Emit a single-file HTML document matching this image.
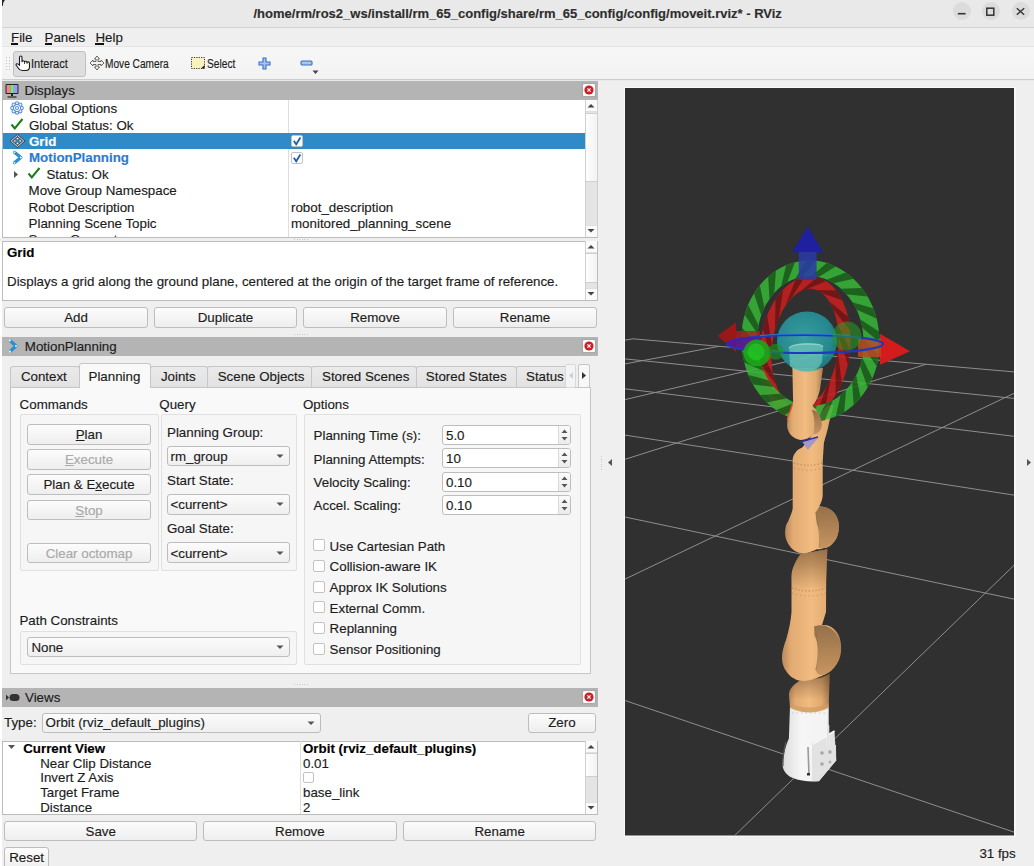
<!DOCTYPE html><html><head><meta charset="utf-8"><style>
html,body{margin:0;padding:0;}
body{width:1034px;height:866px;overflow:hidden;position:relative;background:#efefef;font-family:"Liberation Sans",sans-serif;}
.t{position:absolute;white-space:nowrap;-webkit-text-stroke:0.15px currentColor;}
.r{position:absolute;}
u{text-decoration:underline;text-underline-offset:1px;}
</style></head><body>
<div class="r" style="left:0px;top:0px;width:2px;height:866px;background:#fff;"></div>
<div class="r" style="left:2px;top:0px;width:1032px;height:27px;background:#e9e9e9;"></div>
<div class="r" style="left:2px;top:27px;width:1032px;height:1px;background:#d3d3d3;"></div>
<svg class="r" style="left:1px;top:0px" width="6" height="7"><path d="M1 0H4C2.6 1.5 2 3 1.8 6H1Z" fill="#222"/></svg>
<div class="t " style="left:253.5px;top:7.10px;font-size:13px;line-height:13px;font-weight:bold;color:#2e2e2e;">/home/rm/ros2_ws/install/rm_65_config/share/rm_65_config/config/moveit.rviz* - RViz</div>
<div class="r" style="left:952.8px;top:2.4px;width:18px;height:18px;border-radius:50%;background:#dcdcdc;"></div>
<div class="r" style="left:981.9px;top:2.4px;width:18px;height:18px;border-radius:50%;background:#dcdcdc;"></div>
<div class="r" style="left:1011.5px;top:2.4px;width:18px;height:18px;border-radius:50%;background:#dcdcdc;"></div>
<svg class="r" style="left:950px;top:0px" width="84" height="24"><path d="M7.8 13.7H15.6" stroke="#333" stroke-width="1.6"/><rect x="36.8" y="8.2" width="7" height="7" fill="none" stroke="#333" stroke-width="1.5"/><path d="M66.8 8.2L74.2 14.8M74.2 8.2L66.8 14.8" stroke="#333" stroke-width="1.4"/></svg>
<div class="r" style="left:2px;top:28px;width:1032px;height:18px;background:#efefef;"></div>
<div class="r" style="left:2px;top:46px;width:1032px;height:1px;background:#e3e3e3;"></div>
<div class="t " style="left:11px;top:30.82px;font-size:13.33px;line-height:13.33px;font-weight:normal;color:#1c1c1c;">File</div>
<div class="r" style="left:11px;top:43.3px;width:7px;height:1.5px;background:#111;"></div>
<div class="t " style="left:44.5px;top:30.82px;font-size:13.33px;line-height:13.33px;font-weight:normal;color:#1c1c1c;">Panels</div>
<div class="r" style="left:44.5px;top:43.3px;width:7.5px;height:1.5px;background:#111;"></div>
<div class="t " style="left:95.4px;top:30.82px;font-size:13.33px;line-height:13.33px;font-weight:normal;color:#1c1c1c;">Help</div>
<div class="r" style="left:95.4px;top:43.3px;width:8.599999999999994px;height:1.5px;background:#111;"></div>
<div class="r" style="left:2px;top:47px;width:1032px;height:32px;background:linear-gradient(#f7f7f7,#f2f2f2);"></div>
<div class="r" style="left:2px;top:79px;width:1032px;height:1px;background:#cdcdcd;"></div>
<div class="r" style="left:2px;top:80px;width:1032px;height:1px;background:#e8e8e8;"></div>
<div class="r" style="left:6px;top:57px;width:1px;height:1px;background:#c4c4c4;"></div>
<div class="r" style="left:9px;top:57px;width:1px;height:1px;background:#c4c4c4;"></div>
<div class="r" style="left:6px;top:60px;width:1px;height:1px;background:#c4c4c4;"></div>
<div class="r" style="left:9px;top:60px;width:1px;height:1px;background:#c4c4c4;"></div>
<div class="r" style="left:6px;top:63px;width:1px;height:1px;background:#c4c4c4;"></div>
<div class="r" style="left:9px;top:63px;width:1px;height:1px;background:#c4c4c4;"></div>
<div class="r" style="left:6px;top:66px;width:1px;height:1px;background:#c4c4c4;"></div>
<div class="r" style="left:9px;top:66px;width:1px;height:1px;background:#c4c4c4;"></div>
<div class="r" style="left:6px;top:69px;width:1px;height:1px;background:#c4c4c4;"></div>
<div class="r" style="left:9px;top:69px;width:1px;height:1px;background:#c4c4c4;"></div>
<div class="r" style="left:13px;top:50.5px;width:73px;height:26.5px;box-sizing:border-box;border:1px solid #c0c0c0;border-radius:3px;background:#dedede;"></div>
<div class="t " style="left:31px;top:58.14px;font-size:12px;line-height:12px;font-weight:normal;color:#1c1c1c;transform:scaleX(0.92);transform-origin:0 0;">Interact</div>
<svg class="r" style="left:15px;top:55px" width="16" height="17"><path d="M4.5,9.5 V2.6 Q4.5,1 5.75,1 Q7,1 7,2.6 V6.8 Q7,5.8 8.25,5.8 Q9.5,5.8 9.5,7 Q9.5,6.3 10.75,6.3 Q12,6.3 12,7.5 Q12,6.9 13.2,6.9 Q14.5,6.9 14.5,8.3 V11.8 Q14.5,15.5 11,15.5 H7.2 Q4.6,15.5 3.2,13 L1.2,10.2 Q0.7,9 1.9,8.8 Q3,8.6 4.5,10.3 Z" fill="#fff" stroke="#1a1a1a" stroke-width="1.1" stroke-linejoin="round"/><path d="M9.5,7 V9 M12,7.5 V9" stroke="#1a1a1a" stroke-width="0.8"/></svg>
<div class="t " style="left:105.4px;top:58.14px;font-size:12px;line-height:12px;font-weight:normal;color:#1c1c1c;transform:scaleX(0.845);transform-origin:0 0;">Move Camera</div>
<svg class="r" style="left:89px;top:55px" width="16" height="16"><path d="M8 1L10.5 4H9V6.5H12V5L15 8L12 11V9.5H9V12H10.5L8 15L5.5 12H7V9.5H4V11L1 8L4 5V6.5H7V4H5.5Z" fill="#f4f4f4" stroke="#555" stroke-width="0.9"/></svg>
<svg class="r" style="left:190px;top:56px" width="16" height="14"><rect x="1.5" y="1.5" width="13" height="11" fill="#f8f3bd" stroke="#333" stroke-width="1" stroke-dasharray="1.2 1.2"/><path d="M11 12.5H14.5V9Z" fill="#222"/></svg>
<div class="t " style="left:207px;top:58.14px;font-size:12px;line-height:12px;font-weight:normal;color:#1c1c1c;transform:scaleX(0.85);transform-origin:0 0;">Select</div>
<svg class="r" style="left:258px;top:57px" width="13" height="13"><path d="M5 1H8V5H12V8H8V12H5V8H1V5H5Z" fill="#a9c5ec" stroke="#3a6fc4" stroke-width="1.1"/></svg>
<svg class="r" style="left:300px;top:60px" width="13" height="7"><rect x="1" y="1" width="11" height="4" rx="1" fill="#a9c5ec" stroke="#3a6fc4" stroke-width="1.1"/></svg>
<svg class="r" style="left:312px;top:70px" width="7" height="5"><path d="M0.5 0.5H6.5L3.5 4Z" fill="#444"/></svg>
<div class="r" style="left:2px;top:81px;width:596px;height:19px;background:#b4b4b4;"></div>
<svg class="r" style="left:4px;top:83px" width="17" height="16"><rect x="1.5" y="1" width="13" height="10" rx="1" fill="#222"/><rect x="2.5" y="2" width="3.7" height="8" fill="#e88"/><rect x="6.2" y="2" width="3.7" height="8" fill="#8d8"/><rect x="9.9" y="2" width="3.6" height="8" fill="#99f"/><path d="M7 11H9V13H7Z" fill="#222"/><path d="M3.5 14H12.5" stroke="#222" stroke-width="1.2"/></svg>
<div class="t " style="left:24.5px;top:84.42px;font-size:13.33px;line-height:13.33px;font-weight:normal;color:#1c1c1c;">Displays</div>
<div class="r" style="left:582px;top:83px;width:14px;height:14px;box-sizing:border-box;border:1px solid #a9a9a9;border-radius:2px;background:#fafafa;box-shadow:0 0 1px #999;"></div><svg class="r" style="left:582px;top:83px" width="14" height="14"><circle cx="7" cy="7" r="4.6" fill="#cc1f26"/><path d="M5.4 5.4L8.6 8.6M8.6 5.4L5.4 8.6" stroke="#fff" stroke-width="1.2"/></svg>
<div class="r" style="left:2px;top:100px;width:596px;height:138px;box-sizing:border-box;border-left:1px solid #bcbcbc;border-bottom:1px solid #bcbcbc;border-right:1px solid #d0d0d0;background:#fff;"></div>
<div class="r" style="left:288px;top:100px;width:1px;height:137px;background:#dedede;"></div>
<div class="r" style="left:3px;top:133.2px;width:583px;height:16.200000000000017px;background:#2f8bc7;"></div>
<div class="t " style="left:29px;top:102.12px;font-size:13.33px;line-height:13.33px;font-weight:normal;color:#1c1c1c;">Global Options</div>
<div class="t " style="left:29px;top:118.52px;font-size:13.33px;line-height:13.33px;font-weight:normal;color:#1c1c1c;">Global Status: Ok</div>
<div class="t " style="left:29px;top:134.92px;font-size:13.33px;line-height:13.33px;font-weight:bold;color:#fff;">Grid</div>
<div class="t " style="left:29px;top:151.32px;font-size:13.33px;line-height:13.33px;font-weight:bold;color:#2a7bcf;">MotionPlanning</div>
<div class="t " style="left:46.4px;top:167.72px;font-size:13.33px;line-height:13.33px;font-weight:normal;color:#1c1c1c;">Status: Ok</div>
<div class="t " style="left:28.6px;top:184.12px;font-size:13.33px;line-height:13.33px;font-weight:normal;color:#1c1c1c;">Move Group Namespace</div>
<div class="t " style="left:28.6px;top:200.52px;font-size:13.33px;line-height:13.33px;font-weight:normal;color:#1c1c1c;">Robot Description</div>
<div class="t " style="left:28.6px;top:216.92px;font-size:13.33px;line-height:13.33px;font-weight:normal;color:#1c1c1c;">Planning Scene Topic</div>
<div class="t " style="left:28.6px;top:233.32px;font-size:13.33px;line-height:13.33px;font-weight:normal;color:#1c1c1c;">Scene Geometry</div>
<div class="t " style="left:291px;top:200.52px;font-size:13.33px;line-height:13.33px;font-weight:normal;color:#1c1c1c;">robot_description</div>
<div class="t " style="left:291px;top:216.92px;font-size:13.33px;line-height:13.33px;font-weight:normal;color:#1c1c1c;">monitored_planning_scene</div>
<div class="r" style="left:2px;top:237px;width:596px;height:1px;background:#bcbcbc;"></div>
<div class="r" style="left:0px;top:238px;width:620px;height:3px;background:#efefef;"></div>
<svg class="r" style="left:10px;top:101px" width="14" height="14"><g fill="#fff" stroke="#5a8fd6" stroke-width="1.1"><circle cx="11.60" cy="7.00" r="1.7"/><circle cx="10.25" cy="10.25" r="1.7"/><circle cx="7.00" cy="11.60" r="1.7"/><circle cx="3.75" cy="10.25" r="1.7"/><circle cx="2.40" cy="7.00" r="1.7"/><circle cx="3.75" cy="3.75" r="1.7"/><circle cx="7.00" cy="2.40" r="1.7"/><circle cx="10.25" cy="3.75" r="1.7"/></g><circle cx="7" cy="7" r="4.3" fill="#fff" stroke="none"/><circle cx="7" cy="7" r="3.6" fill="none" stroke="#5a8fd6" stroke-width="1.2"/><circle cx="7" cy="7" r="1.5" fill="none" stroke="#5a8fd6" stroke-width="1.1"/></svg>
<svg class="r" style="left:10px;top:117px" width="14" height="14"><path d="M1.5 7.5L4.8 11.5L12.5 2" fill="none" stroke="#1d7a1d" stroke-width="2"/></svg>
<svg class="r" style="left:10px;top:134px" width="16" height="14"><path d="M7.5 1.5L13.8 7L7.5 12.5L1.2 7Z" fill="none" stroke="#3c4a58" stroke-width="2.4"/><path d="M7.5 1.5L13.8 7L7.5 12.5L1.2 7Z" fill="none" stroke="#e8f0f8" stroke-width="0.9"/><g fill="#f4f8fc" stroke="#3c4a58" stroke-width="0.6"><circle cx="7.5" cy="4.6" r="1.2"/><circle cx="4.8" cy="7" r="1.2"/><circle cx="10.2" cy="7" r="1.2"/><circle cx="7.5" cy="9.4" r="1.2"/></g></svg>
<svg class="r" style="left:12px;top:150px" width="12" height="15"><path d="M2.5 2.2L8.8 7.5L2.5 12.8" fill="none" stroke="#2b8fd3" stroke-width="3.2" stroke-linejoin="round" stroke-linecap="round"/><circle cx="2.5" cy="2.2" r="0.9" fill="#fff"/><circle cx="8.8" cy="7.5" r="0.9" fill="#fff"/><circle cx="2.5" cy="12.8" r="0.9" fill="#fff"/></svg>
<svg class="r" style="left:13px;top:170px" width="6" height="9"><path d="M1 1L5 4.5L1 8Z" fill="#555"/></svg>
<svg class="r" style="left:27px;top:166px" width="14" height="14"><path d="M1.5 7.5L4.8 11.5L12.5 2" fill="none" stroke="#1d7a1d" stroke-width="2"/></svg>
<div class="r" style="left:291px;top:135.2px;width:12px;height:12.0px;box-sizing:border-box;border:1px solid #c2c2c2;border-radius:2px;background:#fff;"></div><svg class="r" style="left:291px;top:135.2px" width="12" height="12"><path d="M2.8 5.8L5.2 9.3L9.4 2.6" stroke="#1f5fa8" stroke-width="1.8" fill="none"/></svg>
<div class="r" style="left:291px;top:151.6px;width:12px;height:12.0px;box-sizing:border-box;border:1px solid #c2c2c2;border-radius:2px;background:#fff;"></div><svg class="r" style="left:291px;top:151.6px" width="12" height="12"><path d="M2.8 5.8L5.2 9.3L9.4 2.6" stroke="#1f5fa8" stroke-width="1.8" fill="none"/></svg>
<div class="r" style="left:585px;top:100px;width:12px;height:137px;box-sizing:border-box;border-left:1px solid #d0d0d0;background:#e4e4e4;"></div><div class="r" style="left:586px;top:112.7px;width:11px;height:69.10000000000001px;box-sizing:border-box;border-bottom:1px solid #cfcfcf;border-top:1px solid #cfcfcf;background:linear-gradient(90deg,#fdfdfd,#f3f3f3);"></div><div class="r" style="left:586px;top:100px;width:11px;height:12px;background:#fafafa;border-bottom:1px solid #e0e0e0;box-sizing:border-box;"></div><div class="r" style="left:586px;top:225px;width:11px;height:12px;background:#fafafa;border-top:1px solid #e0e0e0;box-sizing:border-box;"></div><svg class="r" style="left:587.0px;top:103px" width="8" height="6"><path d="M0.5 4.5L4 1L7.5 4.5Z" fill="#444"/></svg><svg class="r" style="left:587.0px;top:228px" width="8" height="6"><path d="M0.5 1L4 4.5L7.5 1Z" fill="#444"/></svg>
<div class="r" style="left:2px;top:241px;width:596px;height:60px;box-sizing:border-box;border:1px solid #bcbcbc;background:#fff;"></div>
<div class="t " style="left:7px;top:246.22px;font-size:13.33px;line-height:13.33px;font-weight:bold;color:#000;">Grid</div>
<div class="t " style="left:7px;top:275.12px;font-size:13.33px;line-height:13.33px;font-weight:normal;color:#1c1c1c;">Displays a grid along the ground plane, centered at the origin of the target frame of reference.</div>
<div class="r" style="left:585px;top:241px;width:12px;height:59px;box-sizing:border-box;border-left:1px solid #d0d0d0;background:#e4e4e4;"></div><div class="r" style="left:586px;top:253px;width:11px;height:30px;box-sizing:border-box;border-bottom:1px solid #cfcfcf;border-top:1px solid #cfcfcf;background:linear-gradient(90deg,#fdfdfd,#f3f3f3);"></div><div class="r" style="left:586px;top:241px;width:11px;height:12px;background:#fafafa;border-bottom:1px solid #e0e0e0;box-sizing:border-box;"></div><div class="r" style="left:586px;top:288px;width:11px;height:12px;background:#fafafa;border-top:1px solid #e0e0e0;box-sizing:border-box;"></div><svg class="r" style="left:587.0px;top:244px" width="8" height="6"><path d="M0.5 4.5L4 1L7.5 4.5Z" fill="#444"/></svg><svg class="r" style="left:587.0px;top:291px" width="8" height="6"><path d="M0.5 1L4 4.5L7.5 1Z" fill="#444"/></svg>
<div class="r" style="left:4px;top:306.7px;width:144px;height:20.900000000000034px;box-sizing:border-box;border:1px solid #bdbdbd;border-radius:3px;background:linear-gradient(#fcfcfc,#eeeeee);"></div><div class="t" style="left:4px;width:144px;text-align:center;top:310.72px;font-size:13.33px;line-height:13.33px;font-weight:normal;color:#1c1c1c;">Add</div>
<div class="r" style="left:154px;top:306.7px;width:143px;height:20.900000000000034px;box-sizing:border-box;border:1px solid #bdbdbd;border-radius:3px;background:linear-gradient(#fcfcfc,#eeeeee);"></div><div class="t" style="left:154px;width:143px;text-align:center;top:310.72px;font-size:13.33px;line-height:13.33px;font-weight:normal;color:#1c1c1c;">Duplicate</div>
<div class="r" style="left:303px;top:306.7px;width:144px;height:20.900000000000034px;box-sizing:border-box;border:1px solid #bdbdbd;border-radius:3px;background:linear-gradient(#fcfcfc,#eeeeee);"></div><div class="t" style="left:303px;width:144px;text-align:center;top:310.72px;font-size:13.33px;line-height:13.33px;font-weight:normal;color:#1c1c1c;">Remove</div>
<div class="r" style="left:453px;top:306.7px;width:144px;height:20.900000000000034px;box-sizing:border-box;border:1px solid #bdbdbd;border-radius:3px;background:linear-gradient(#fcfcfc,#eeeeee);"></div><div class="t" style="left:453px;width:144px;text-align:center;top:310.72px;font-size:13.33px;line-height:13.33px;font-weight:normal;color:#1c1c1c;">Rename</div>
<div class="r" style="left:2px;top:337px;width:596px;height:18.5px;background:#b4b4b4;"></div>
<svg class="r" style="left:7px;top:338px" width="12" height="16"><path d="M3 2.5L9 8L3 13.5" fill="none" stroke="#2b8fd3" stroke-width="3.2" stroke-linejoin="round"/><circle cx="3" cy="2.5" r="0.9" fill="#fff"/><circle cx="9" cy="8" r="0.9" fill="#fff"/><circle cx="3" cy="13.5" r="0.9" fill="#fff"/></svg>
<div class="t " style="left:24.8px;top:340.12px;font-size:13.33px;line-height:13.33px;font-weight:normal;color:#1c1c1c;">MotionPlanning</div>
<div class="r" style="left:582px;top:339px;width:14px;height:14px;box-sizing:border-box;border:1px solid #a9a9a9;border-radius:2px;background:#fafafa;box-shadow:0 0 1px #999;"></div><svg class="r" style="left:582px;top:339px" width="14" height="14"><circle cx="7" cy="7" r="4.6" fill="#cc1f26"/><path d="M5.4 5.4L8.6 8.6M8.6 5.4L5.4 8.6" stroke="#fff" stroke-width="1.2"/></svg>
<div class="r" style="left:9.5px;top:386.5px;width:581.5px;height:287.0px;box-sizing:border-box;border:1px solid #c6c6c6;background:#f9f9f9;"></div>
<div class="r" style="left:9.5px;top:365.5px;width:70.0px;height:21.5px;box-sizing:border-box;border:1px solid #c6c6c6;border-bottom:none;border-radius:3px 3px 0 0;background:linear-gradient(#eaeaea,#e2e2e2);"></div>
<div class="t " style="left:20.9px;top:370.22px;font-size:13.33px;line-height:13.33px;font-weight:normal;color:#1c1c1c;">Context</div>
<div class="r" style="left:150.4px;top:365.5px;width:57.900000000000006px;height:21.5px;box-sizing:border-box;border:1px solid #c6c6c6;border-bottom:none;border-radius:3px 3px 0 0;background:linear-gradient(#eaeaea,#e2e2e2);"></div>
<div class="t " style="left:160.9px;top:370.22px;font-size:13.33px;line-height:13.33px;font-weight:normal;color:#1c1c1c;">Joints</div>
<div class="r" style="left:207.3px;top:365.5px;width:104.89999999999998px;height:21.5px;box-sizing:border-box;border:1px solid #c6c6c6;border-bottom:none;border-radius:3px 3px 0 0;background:linear-gradient(#eaeaea,#e2e2e2);"></div>
<div class="t " style="left:217.7px;top:370.22px;font-size:13.33px;line-height:13.33px;font-weight:normal;color:#1c1c1c;">Scene Objects</div>
<div class="r" style="left:311.2px;top:365.5px;width:105.80000000000001px;height:21.5px;box-sizing:border-box;border:1px solid #c6c6c6;border-bottom:none;border-radius:3px 3px 0 0;background:linear-gradient(#eaeaea,#e2e2e2);"></div>
<div class="t " style="left:322px;top:370.22px;font-size:13.33px;line-height:13.33px;font-weight:normal;color:#1c1c1c;">Stored Scenes</div>
<div class="r" style="left:416px;top:365.5px;width:101px;height:21.5px;box-sizing:border-box;border:1px solid #c6c6c6;border-bottom:none;border-radius:3px 3px 0 0;background:linear-gradient(#eaeaea,#e2e2e2);"></div>
<div class="t " style="left:425.8px;top:370.22px;font-size:13.33px;line-height:13.33px;font-weight:normal;color:#1c1c1c;">Stored States</div>
<div class="r" style="left:516px;top:365.5px;width:55px;height:21.5px;box-sizing:border-box;border:1px solid #c6c6c6;border-bottom:none;border-radius:3px 3px 0 0;background:linear-gradient(#eaeaea,#e2e2e2);"></div>
<div class="t " style="left:526px;top:370.22px;font-size:13.33px;line-height:13.33px;font-weight:normal;color:#1c1c1c;">Status</div>
<div class="r" style="left:78.5px;top:363.3px;width:72.9px;height:24.69999999999999px;box-sizing:border-box;border:1px solid #c6c6c6;border-bottom:none;border-radius:3px 3px 0 0;background:#f9f9f9;"></div>
<div class="t " style="left:88.5px;top:369.52px;font-size:13.33px;line-height:13.33px;font-weight:normal;color:#1c1c1c;">Planning</div>
<div class="r" style="left:565px;top:363.5px;width:11px;height:24.0px;box-sizing:border-box;border:1px solid #d8d8d8;border-radius:2px;background:#f4f4f4;"></div>
<div class="r" style="left:578px;top:363.5px;width:12px;height:24.0px;box-sizing:border-box;border:1px solid #c6c6c6;border-radius:2px;background:#f8f8f8;"></div>
<svg class="r" style="left:567px;top:371px" width="8" height="9"><path d="M6 1L2 4.5L6 8Z" fill="#cfcfcf"/></svg>
<svg class="r" style="left:580px;top:371px" width="8" height="9"><path d="M2 1L6 4.5L2 8Z" fill="#333"/></svg>
<div class="t " style="left:19.6px;top:397.82px;font-size:13.33px;line-height:13.33px;font-weight:normal;color:#1c1c1c;">Commands</div>
<div class="t " style="left:159.3px;top:397.82px;font-size:13.33px;line-height:13.33px;font-weight:normal;color:#1c1c1c;">Query</div>
<div class="t " style="left:303px;top:397.82px;font-size:13.33px;line-height:13.33px;font-weight:normal;color:#1c1c1c;">Options</div>
<div class="r" style="left:20.4px;top:414.4px;width:138.6px;height:156.60000000000002px;box-sizing:border-box;border:1px solid #e0e0e0;border-radius:2px;background:#f6f6f6;"></div>
<div class="r" style="left:160.5px;top:414.4px;width:136.5px;height:156.60000000000002px;box-sizing:border-box;border:1px solid #e0e0e0;border-radius:2px;background:#f6f6f6;"></div>
<div class="r" style="left:303.5px;top:414.4px;width:277.5px;height:250.60000000000002px;box-sizing:border-box;border:1px solid #e0e0e0;border-radius:2px;background:#f6f6f6;"></div>
<div class="r" style="left:27.4px;top:424px;width:123.29999999999998px;height:20.80000000000001px;box-sizing:border-box;border:1px solid #bdbdbd;border-radius:3px;background:linear-gradient(#fcfcfc,#eeeeee);"></div><div class="t" style="left:27.4px;width:123.29999999999998px;text-align:center;top:428.22px;font-size:13.33px;line-height:13.33px;font-weight:normal;color:#1c1c1c;"><u>P</u>lan</div>
<div class="r" style="left:27.4px;top:449px;width:123.29999999999998px;height:20.5px;box-sizing:border-box;border:1px solid #bdbdbd;border-radius:3px;background:linear-gradient(#fcfcfc,#eeeeee);"></div><div class="t" style="left:27.4px;width:123.29999999999998px;text-align:center;top:453.07px;font-size:13.33px;line-height:13.33px;font-weight:normal;color:#a9a9a9;"><u>E</u>xecute</div>
<div class="r" style="left:27.4px;top:474px;width:123.29999999999998px;height:20.80000000000001px;box-sizing:border-box;border:1px solid #bdbdbd;border-radius:3px;background:linear-gradient(#fcfcfc,#eeeeee);"></div><div class="t" style="left:27.4px;width:123.29999999999998px;text-align:center;top:478.22px;font-size:13.33px;line-height:13.33px;font-weight:normal;color:#1c1c1c;">Plan &amp; E<u>x</u>ecute</div>
<div class="r" style="left:27.4px;top:499.5px;width:123.29999999999998px;height:20.5px;box-sizing:border-box;border:1px solid #bdbdbd;border-radius:3px;background:linear-gradient(#fcfcfc,#eeeeee);"></div><div class="t" style="left:27.4px;width:123.29999999999998px;text-align:center;top:503.57px;font-size:13.33px;line-height:13.33px;font-weight:normal;color:#a9a9a9;"><u>S</u>top</div>
<div class="r" style="left:27.4px;top:542.6px;width:123.29999999999998px;height:20.399999999999977px;box-sizing:border-box;border:1px solid #bdbdbd;border-radius:3px;background:linear-gradient(#fcfcfc,#eeeeee);"></div><div class="t" style="left:27.4px;width:123.29999999999998px;text-align:center;top:546.62px;font-size:13.33px;line-height:13.33px;font-weight:normal;color:#a9a9a9;">Clear octomap</div>
<div class="t " style="left:167px;top:425.92px;font-size:13.33px;line-height:13.33px;font-weight:normal;color:#1c1c1c;">Planning Group:</div>
<div class="r" style="left:166.5px;top:445.5px;width:123.30000000000001px;height:20.80000000000001px;box-sizing:border-box;border:1px solid #bdbdbd;border-radius:3px;background:linear-gradient(#fbfbfb,#efefef);"></div><div class="t " style="left:170.5px;top:449.72px;font-size:13.33px;line-height:13.33px;font-weight:normal;color:#1c1c1c;">rm_group</div><svg class="r" style="left:275.8px;top:453.9px" width="8" height="5"><path d="M0.5 0.5H7.5L4 4Z" fill="#555"/></svg>
<div class="t " style="left:167px;top:474.22px;font-size:13.33px;line-height:13.33px;font-weight:normal;color:#1c1c1c;">Start State:</div>
<div class="r" style="left:166.5px;top:494px;width:123.30000000000001px;height:20.700000000000045px;box-sizing:border-box;border:1px solid #bdbdbd;border-radius:3px;background:linear-gradient(#fbfbfb,#efefef);"></div><div class="t " style="left:170.5px;top:498.17px;font-size:13.33px;line-height:13.33px;font-weight:normal;color:#1c1c1c;">&lt;current&gt;</div><svg class="r" style="left:275.8px;top:502.35px" width="8" height="5"><path d="M0.5 0.5H7.5L4 4Z" fill="#555"/></svg>
<div class="t " style="left:167px;top:522.42px;font-size:13.33px;line-height:13.33px;font-weight:normal;color:#1c1c1c;">Goal State:</div>
<div class="r" style="left:166.5px;top:542.4px;width:123.30000000000001px;height:20.600000000000023px;box-sizing:border-box;border:1px solid #bdbdbd;border-radius:3px;background:linear-gradient(#fbfbfb,#efefef);"></div><div class="t " style="left:170.5px;top:546.52px;font-size:13.33px;line-height:13.33px;font-weight:normal;color:#1c1c1c;">&lt;current&gt;</div><svg class="r" style="left:275.8px;top:550.7px" width="8" height="5"><path d="M0.5 0.5H7.5L4 4Z" fill="#555"/></svg>
<div class="t " style="left:19.4px;top:614.42px;font-size:13.33px;line-height:13.33px;font-weight:normal;color:#1c1c1c;">Path Constraints</div>
<div class="r" style="left:20.3px;top:630.8px;width:276.7px;height:34.200000000000045px;box-sizing:border-box;border:1px solid #e0e0e0;border-radius:2px;background:#f6f6f6;"></div>
<div class="r" style="left:27.4px;top:636.6px;width:262.20000000000005px;height:20.699999999999932px;box-sizing:border-box;border:1px solid #bdbdbd;border-radius:3px;background:linear-gradient(#fbfbfb,#efefef);"></div><div class="t " style="left:31.4px;top:640.77px;font-size:13.33px;line-height:13.33px;font-weight:normal;color:#1c1c1c;">None</div><svg class="r" style="left:275.6px;top:644.95px" width="8" height="5"><path d="M0.5 0.5H7.5L4 4Z" fill="#555"/></svg>
<div class="t " style="left:313.6px;top:429.22px;font-size:13.33px;line-height:13.33px;font-weight:normal;color:#1c1c1c;">Planning Time (s):</div>
<div class="r" style="left:441.5px;top:425.0px;width:129.20000000000005px;height:20.0px;box-sizing:border-box;border:1px solid #bdbdbd;border-radius:3px;background:#fff;"></div><div class="r" style="left:557.7px;top:426.0px;width:1.0px;height:18.0px;background:#d9d9d9;"></div><div class="r" style="left:558.7px;top:426.0px;width:11.0px;height:18.0px;background:linear-gradient(#fafafa,#ececec);border-radius:0 2px 2px 0;"></div><svg class="r" style="left:560.7px;top:428.0px" width="7" height="14"><path d="M0.5 5L3.5 1.5L6.5 5Z M0.5 9L3.5 12.5L6.5 9Z" fill="#555"/></svg><div class="t " style="left:446.0px;top:429.02px;font-size:13.33px;line-height:13.33px;font-weight:normal;color:#1c1c1c;">5.0</div>
<div class="t " style="left:313.6px;top:452.52px;font-size:13.33px;line-height:13.33px;font-weight:normal;color:#1c1c1c;">Planning Attempts:</div>
<div class="r" style="left:441.5px;top:448.3px;width:129.20000000000005px;height:20.0px;box-sizing:border-box;border:1px solid #bdbdbd;border-radius:3px;background:#fff;"></div><div class="r" style="left:557.7px;top:449.3px;width:1.0px;height:18.0px;background:#d9d9d9;"></div><div class="r" style="left:558.7px;top:449.3px;width:11.0px;height:18.0px;background:linear-gradient(#fafafa,#ececec);border-radius:0 2px 2px 0;"></div><svg class="r" style="left:560.7px;top:451.3px" width="7" height="14"><path d="M0.5 5L3.5 1.5L6.5 5Z M0.5 9L3.5 12.5L6.5 9Z" fill="#555"/></svg><div class="t " style="left:446.0px;top:452.32px;font-size:13.33px;line-height:13.33px;font-weight:normal;color:#1c1c1c;">10</div>
<div class="t " style="left:313.6px;top:475.82px;font-size:13.33px;line-height:13.33px;font-weight:normal;color:#1c1c1c;">Velocity Scaling:</div>
<div class="r" style="left:441.5px;top:471.6px;width:129.20000000000005px;height:20.0px;box-sizing:border-box;border:1px solid #bdbdbd;border-radius:3px;background:#fff;"></div><div class="r" style="left:557.7px;top:472.6px;width:1.0px;height:18.0px;background:#d9d9d9;"></div><div class="r" style="left:558.7px;top:472.6px;width:11.0px;height:18.0px;background:linear-gradient(#fafafa,#ececec);border-radius:0 2px 2px 0;"></div><svg class="r" style="left:560.7px;top:474.6px" width="7" height="14"><path d="M0.5 5L3.5 1.5L6.5 5Z M0.5 9L3.5 12.5L6.5 9Z" fill="#555"/></svg><div class="t " style="left:446.0px;top:475.62px;font-size:13.33px;line-height:13.33px;font-weight:normal;color:#1c1c1c;">0.10</div>
<div class="t " style="left:313.6px;top:499.12px;font-size:13.33px;line-height:13.33px;font-weight:normal;color:#1c1c1c;">Accel. Scaling:</div>
<div class="r" style="left:441.5px;top:494.9px;width:129.20000000000005px;height:20.0px;box-sizing:border-box;border:1px solid #bdbdbd;border-radius:3px;background:#fff;"></div><div class="r" style="left:557.7px;top:495.9px;width:1.0px;height:18.0px;background:#d9d9d9;"></div><div class="r" style="left:558.7px;top:495.9px;width:11.0px;height:18.0px;background:linear-gradient(#fafafa,#ececec);border-radius:0 2px 2px 0;"></div><svg class="r" style="left:560.7px;top:497.9px" width="7" height="14"><path d="M0.5 5L3.5 1.5L6.5 5Z M0.5 9L3.5 12.5L6.5 9Z" fill="#555"/></svg><div class="t " style="left:446.0px;top:498.92px;font-size:13.33px;line-height:13.33px;font-weight:normal;color:#1c1c1c;">0.10</div>
<div class="r" style="left:313.4px;top:539.3px;width:12.0px;height:12.0px;box-sizing:border-box;border:1px solid #c2c2c2;border-radius:2px;background:#fff;"></div>
<div class="t " style="left:329.6px;top:539.52px;font-size:13.33px;line-height:13.33px;font-weight:normal;color:#1c1c1c;">Use Cartesian Path</div>
<div class="r" style="left:313.4px;top:560.0px;width:12.0px;height:12.0px;box-sizing:border-box;border:1px solid #c2c2c2;border-radius:2px;background:#fff;"></div>
<div class="t " style="left:329.6px;top:560.22px;font-size:13.33px;line-height:13.33px;font-weight:normal;color:#1c1c1c;">Collision-aware IK</div>
<div class="r" style="left:313.4px;top:580.6999999999999px;width:12.0px;height:12.0px;box-sizing:border-box;border:1px solid #c2c2c2;border-radius:2px;background:#fff;"></div>
<div class="t " style="left:329.6px;top:580.92px;font-size:13.33px;line-height:13.33px;font-weight:normal;color:#1c1c1c;">Approx IK Solutions</div>
<div class="r" style="left:313.4px;top:601.4px;width:12.0px;height:12.0px;box-sizing:border-box;border:1px solid #c2c2c2;border-radius:2px;background:#fff;"></div>
<div class="t " style="left:329.6px;top:601.62px;font-size:13.33px;line-height:13.33px;font-weight:normal;color:#1c1c1c;">External Comm.</div>
<div class="r" style="left:313.4px;top:622.0999999999999px;width:12.0px;height:12.0px;box-sizing:border-box;border:1px solid #c2c2c2;border-radius:2px;background:#fff;"></div>
<div class="t " style="left:329.6px;top:622.32px;font-size:13.33px;line-height:13.33px;font-weight:normal;color:#1c1c1c;">Replanning</div>
<div class="r" style="left:313.4px;top:642.8px;width:12.0px;height:12.0px;box-sizing:border-box;border:1px solid #c2c2c2;border-radius:2px;background:#fff;"></div>
<div class="t " style="left:329.6px;top:643.02px;font-size:13.33px;line-height:13.33px;font-weight:normal;color:#1c1c1c;">Sensor Positioning</div>
<div class="r" style="left:601px;top:456.0px;width:1px;height:1.0px;background:#c8c8c8;"></div>
<div class="r" style="left:601px;top:458.5px;width:1px;height:1.0px;background:#c8c8c8;"></div>
<div class="r" style="left:601px;top:461.0px;width:1px;height:1.0px;background:#c8c8c8;"></div>
<div class="r" style="left:601px;top:463.5px;width:1px;height:1.0px;background:#c8c8c8;"></div>
<div class="r" style="left:601px;top:466.0px;width:1px;height:1.0px;background:#c8c8c8;"></div>
<div class="r" style="left:601px;top:468.5px;width:1px;height:1.0px;background:#c8c8c8;"></div>
<div class="r" style="left:294.0px;top:238.5px;width:1.0px;height:1.0px;background:#c8c8c8;"></div>
<div class="r" style="left:296.5px;top:238.5px;width:1.0px;height:1.0px;background:#c8c8c8;"></div>
<div class="r" style="left:299.0px;top:238.5px;width:1.0px;height:1.0px;background:#c8c8c8;"></div>
<div class="r" style="left:301.5px;top:238.5px;width:1.0px;height:1.0px;background:#c8c8c8;"></div>
<div class="r" style="left:304.0px;top:238.5px;width:1.0px;height:1.0px;background:#c8c8c8;"></div>
<div class="r" style="left:306.5px;top:238.5px;width:1.0px;height:1.0px;background:#c8c8c8;"></div>
<div class="r" style="left:294.0px;top:333.5px;width:1.0px;height:1.0px;background:#c8c8c8;"></div>
<div class="r" style="left:296.5px;top:333.5px;width:1.0px;height:1.0px;background:#c8c8c8;"></div>
<div class="r" style="left:299.0px;top:333.5px;width:1.0px;height:1.0px;background:#c8c8c8;"></div>
<div class="r" style="left:301.5px;top:333.5px;width:1.0px;height:1.0px;background:#c8c8c8;"></div>
<div class="r" style="left:304.0px;top:333.5px;width:1.0px;height:1.0px;background:#c8c8c8;"></div>
<div class="r" style="left:306.5px;top:333.5px;width:1.0px;height:1.0px;background:#c8c8c8;"></div>
<div class="r" style="left:294.0px;top:684px;width:1.0px;height:1px;background:#c8c8c8;"></div>
<div class="r" style="left:296.5px;top:684px;width:1.0px;height:1px;background:#c8c8c8;"></div>
<div class="r" style="left:299.0px;top:684px;width:1.0px;height:1px;background:#c8c8c8;"></div>
<div class="r" style="left:301.5px;top:684px;width:1.0px;height:1px;background:#c8c8c8;"></div>
<div class="r" style="left:304.0px;top:684px;width:1.0px;height:1px;background:#c8c8c8;"></div>
<div class="r" style="left:306.5px;top:684px;width:1.0px;height:1px;background:#c8c8c8;"></div>
<div class="r" style="left:2px;top:688.4px;width:596px;height:18.200000000000045px;background:#b4b4b4;"></div>
<svg class="r" style="left:5px;top:692px" width="16" height="11"><path d="M1 2.5L4 5.5L1 8.5Z" fill="#333"/><rect x="4.5" y="2" width="10" height="7" rx="3.5" fill="#333"/></svg>
<div class="t " style="left:25px;top:690.92px;font-size:13.33px;line-height:13.33px;font-weight:normal;color:#1c1c1c;">Views</div>
<div class="r" style="left:582px;top:690px;width:14px;height:14px;box-sizing:border-box;border:1px solid #a9a9a9;border-radius:2px;background:#fafafa;box-shadow:0 0 1px #999;"></div><svg class="r" style="left:582px;top:690px" width="14" height="14"><circle cx="7" cy="7" r="4.6" fill="#cc1f26"/><path d="M5.4 5.4L8.6 8.6M8.6 5.4L5.4 8.6" stroke="#fff" stroke-width="1.2"/></svg>
<div class="t " style="left:4px;top:716.42px;font-size:13.33px;line-height:13.33px;font-weight:normal;color:#1c1c1c;">Type:</div>
<div class="r" style="left:41.6px;top:712.6px;width:279.4px;height:20.0px;box-sizing:border-box;border:1px solid #bdbdbd;border-radius:3px;background:linear-gradient(#fbfbfb,#efefef);"></div><div class="t " style="left:45.6px;top:716.42px;font-size:13.33px;line-height:13.33px;font-weight:normal;color:#1c1c1c;">Orbit (rviz_default_plugins)</div><svg class="r" style="left:307px;top:720.6px" width="8" height="5"><path d="M0.5 0.5H7.5L4 4Z" fill="#555"/></svg>
<div class="r" style="left:527.5px;top:712.6px;width:68.79999999999995px;height:20.0px;box-sizing:border-box;border:1px solid #bdbdbd;border-radius:3px;background:linear-gradient(#fcfcfc,#eeeeee);"></div><div class="t" style="left:527.5px;width:68.79999999999995px;text-align:center;top:716.42px;font-size:13.33px;line-height:13.33px;font-weight:normal;color:#1c1c1c;">Zero</div>
<div class="r" style="left:2px;top:740.5px;width:596px;height:74.0px;box-sizing:border-box;border:1px solid #bcbcbc;background:#fff;"></div>
<div class="r" style="left:300px;top:741px;width:1px;height:73px;background:#dedede;"></div>
<svg class="r" style="left:7px;top:744px" width="9" height="6"><path d="M1 1H8L4.5 5Z" fill="#555"/></svg>
<div class="t " style="left:23.2px;top:742.22px;font-size:13.33px;line-height:13.33px;font-weight:bold;color:#000;">Current View</div>
<div class="t " style="left:303px;top:742.22px;font-size:13.33px;line-height:13.33px;font-weight:bold;color:#000;">Orbit (rviz_default_plugins)</div>
<div class="t " style="left:40.2px;top:756.82px;font-size:13.33px;line-height:13.33px;font-weight:normal;color:#1c1c1c;">Near Clip Distance</div>
<div class="t " style="left:303px;top:756.82px;font-size:13.33px;line-height:13.33px;font-weight:normal;color:#1c1c1c;">0.01</div>
<div class="t " style="left:40.2px;top:771.42px;font-size:13.33px;line-height:13.33px;font-weight:normal;color:#1c1c1c;">Invert Z Axis</div>
<div class="t " style="left:40.2px;top:786.02px;font-size:13.33px;line-height:13.33px;font-weight:normal;color:#1c1c1c;">Target Frame</div>
<div class="t " style="left:303px;top:786.02px;font-size:13.33px;line-height:13.33px;font-weight:normal;color:#1c1c1c;">base_link</div>
<div class="t " style="left:40.2px;top:800.62px;font-size:13.33px;line-height:13.33px;font-weight:normal;color:#1c1c1c;">Distance</div>
<div class="t " style="left:303px;top:800.62px;font-size:13.33px;line-height:13.33px;font-weight:normal;color:#1c1c1c;">2</div>
<div class="r" style="left:303px;top:772px;width:11px;height:11px;box-sizing:border-box;border:1px solid #c2c2c2;border-radius:2px;background:#fff;"></div>
<div class="r" style="left:585px;top:741px;width:12px;height:73px;box-sizing:border-box;border-left:1px solid #d0d0d0;background:#e4e4e4;"></div><div class="r" style="left:586px;top:753px;width:11px;height:24px;box-sizing:border-box;border-bottom:1px solid #cfcfcf;border-top:1px solid #cfcfcf;background:linear-gradient(90deg,#fdfdfd,#f3f3f3);"></div><div class="r" style="left:586px;top:741px;width:11px;height:12px;background:#fafafa;border-bottom:1px solid #e0e0e0;box-sizing:border-box;"></div><div class="r" style="left:586px;top:802px;width:11px;height:12px;background:#fafafa;border-top:1px solid #e0e0e0;box-sizing:border-box;"></div><svg class="r" style="left:587.0px;top:744px" width="8" height="6"><path d="M0.5 4.5L4 1L7.5 4.5Z" fill="#444"/></svg><svg class="r" style="left:587.0px;top:805px" width="8" height="6"><path d="M0.5 1L4 4.5L7.5 1Z" fill="#444"/></svg>
<div class="r" style="left:4.3px;top:820.8px;width:192.89999999999998px;height:20.40000000000009px;box-sizing:border-box;border:1px solid #bdbdbd;border-radius:3px;background:linear-gradient(#fcfcfc,#eeeeee);"></div><div class="t" style="left:4.3px;width:192.89999999999998px;text-align:center;top:824.82px;font-size:13.33px;line-height:13.33px;font-weight:normal;color:#1c1c1c;">Save</div>
<div class="r" style="left:202.8px;top:820.8px;width:194.2px;height:20.40000000000009px;box-sizing:border-box;border:1px solid #bdbdbd;border-radius:3px;background:linear-gradient(#fcfcfc,#eeeeee);"></div><div class="t" style="left:202.8px;width:194.2px;text-align:center;top:824.82px;font-size:13.33px;line-height:13.33px;font-weight:normal;color:#1c1c1c;">Remove</div>
<div class="r" style="left:403px;top:820.8px;width:193.29999999999995px;height:20.40000000000009px;box-sizing:border-box;border:1px solid #bdbdbd;border-radius:3px;background:linear-gradient(#fcfcfc,#eeeeee);"></div><div class="t" style="left:403px;width:193.29999999999995px;text-align:center;top:824.82px;font-size:13.33px;line-height:13.33px;font-weight:normal;color:#1c1c1c;">Rename</div>
<div class="r" style="left:4.3px;top:846.5px;width:44.7px;height:23.5px;box-sizing:border-box;border:1px solid #bdbdbd;border-radius:3px;background:linear-gradient(#fcfcfc,#eeeeee);"></div><div class="t" style="left:4.3px;width:44.7px;text-align:center;top:851.02px;font-size:13.33px;line-height:13.33px;font-weight:normal;color:#1c1c1c;">Reset</div>
<svg class="r" style="left:607px;top:458px" width="6" height="9"><path d="M5 1L1 4.5L5 8Z" fill="#555"/></svg>
<svg class="r" style="left:1026px;top:458px" width="6" height="9"><path d="M1 1L5 4.5L1 8Z" fill="#555"/></svg>
<div class="t " style="left:979.4px;top:847.22px;font-size:13.33px;line-height:13.33px;font-weight:normal;color:#1c1c1c;">31 fps</div>
<div class="r" style="left:624px;top:87px;width:392px;height:750px;background:#f8f8f8;"></div>
<svg class="r" style="left:625px;top:88px" width="389" height="747.5" viewBox="625 88 389 747.5"><rect x="625" y="88" width="389" height="747.5" fill="#303030"/><line x1="625.0" y1="340.1" x2="633.0" y2="338.8" stroke="#8e8e8e" stroke-width="1"/><line x1="625.0" y1="363.9" x2="719.1" y2="346.3" stroke="#8e8e8e" stroke-width="1"/><line x1="625.0" y1="399.6" x2="816.0" y2="354.7" stroke="#8e8e8e" stroke-width="1"/><line x1="625.0" y1="459.3" x2="926.0" y2="364.3" stroke="#8e8e8e" stroke-width="1"/><line x1="625.0" y1="579.1" x2="1014.0" y2="393.3" stroke="#8e8e8e" stroke-width="1"/><line x1="734.7" y1="835.5" x2="1014.0" y2="565.3" stroke="#8e8e8e" stroke-width="1"/><line x1="625.0" y1="700.5" x2="1014.0" y2="832.1" stroke="#8e8e8e" stroke-width="1"/><line x1="625.0" y1="517.0" x2="1014.0" y2="599.1" stroke="#8e8e8e" stroke-width="1"/><line x1="625.0" y1="435.1" x2="1014.0" y2="495.1" stroke="#8e8e8e" stroke-width="1"/><line x1="625.0" y1="388.8" x2="1014.0" y2="436.3" stroke="#8e8e8e" stroke-width="1"/><line x1="625.0" y1="358.9" x2="1014.0" y2="398.4" stroke="#8e8e8e" stroke-width="1"/><line x1="633.0" y1="338.8" x2="1014.0" y2="371.9" stroke="#8e8e8e" stroke-width="1"/><defs>
<linearGradient id="tan" x1="0" x2="1" y1="0" y2="0"><stop offset="0" stop-color="#b98a5c"/><stop offset="0.15" stop-color="#e2ab72"/><stop offset="0.5" stop-color="#f2bb80"/><stop offset="0.8" stop-color="#e0a970"/><stop offset="1" stop-color="#a87c52"/></linearGradient>
<linearGradient id="cap" x1="0" x2="0" y1="0" y2="1"><stop offset="0" stop-color="#94704a"/><stop offset="1" stop-color="#c8955f"/></linearGradient>
<linearGradient id="white" x1="0" x2="1" y1="0" y2="0"><stop offset="0" stop-color="#dcdcdc"/><stop offset="0.35" stop-color="#f6f6f6"/><stop offset="0.8" stop-color="#f3f3f3"/><stop offset="1" stop-color="#d8d8d8"/></linearGradient>
<radialGradient id="sph" cx="0.45" cy="0.45" r="0.6"><stop offset="0" stop-color="#38b0b4"/><stop offset="0.75" stop-color="#2598a0"/><stop offset="1" stop-color="#1a7e88"/></radialGradient>
<linearGradient id="ao2" gradientUnits="userSpaceOnUse" x1="0" y1="550" x2="0" y2="590"><stop offset="0" stop-color="#3a2410" stop-opacity="0.45"/><stop offset="1" stop-color="#3a2410" stop-opacity="0"/></linearGradient>
<linearGradient id="ao1" gradientUnits="userSpaceOnUse" x1="0" y1="674" x2="0" y2="700"><stop offset="0" stop-color="#3a2410" stop-opacity="0.4"/><stop offset="1" stop-color="#3a2410" stop-opacity="0"/></linearGradient>
<linearGradient id="ao4" gradientUnits="userSpaceOnUse" x1="0" y1="440" x2="0" y2="475"><stop offset="0" stop-color="#3a2410" stop-opacity="0.4"/><stop offset="1" stop-color="#3a2410" stop-opacity="0"/></linearGradient>
<linearGradient id="ao5" gradientUnits="userSpaceOnUse" x1="0" y1="368" x2="0" y2="385"><stop offset="0" stop-color="#3a2410" stop-opacity="0.25"/><stop offset="1" stop-color="#3a2410" stop-opacity="0"/></linearGradient>
</defs>
<!-- base -->
<path d="M790,706 C803,712 816,712 828.7,706 L828.7,745 L836,745 L836.2,760.4 L818.9,781.2 C810,782 800,781 792.3,777.8 C786,775 782.5,770 782.5,764 C783,755 786,745 788.9,738.5 Z" fill="url(#white)"/>
<path d="M812,743 L834.5,731 L836.2,760.4 L819,781 L812,781 Z" fill="#e2e2e2"/>
<path d="M813,744 L834.5,731" stroke="#f8f8f8" stroke-width="1.5"/>
<path d="M828,725 L828,748" stroke="#fafafa" stroke-width="2.5"/>
<path d="M828,725 L828,748" stroke="#b0b0b0" stroke-width="0.6"/>
<path d="M786,742 C784,750 782.5,758 783,766" stroke="#555" stroke-width="1.3" fill="none"/>
<path d="M808,747 L809,775" stroke="#9a9a9a" stroke-width="1.6"/>
<rect x="807" y="773" width="3" height="2.5" fill="#333"/>
<circle cx="822" cy="753" r="1.8" fill="#a8a8a8"/><circle cx="830" cy="752" r="1.8" fill="#a8a8a8"/><circle cx="822" cy="764" r="1.8" fill="#a8a8a8"/><circle cx="830" cy="762" r="1.5" fill="#b0b0b0"/>
<path d="M792,713 L826,713" stroke="#b8b8b8" stroke-width="0.7" stroke-dasharray="1.5 3"/>
<!-- link1 -->
<path d="M790,707.3 C803,714 816,714 828.7,707.3 L829.7,673.5 C826,676 820,678.6 814.4,678.6 C806,679 800,680 797.3,682.4 C792,686 789,690 789,695 Z" fill="url(#tan)"/>
<path d="M789,700 L829,700 L829.7,673.5 C826,676 820,678.6 814.4,678.6 C806,679 800,680 797.3,682.4 C792,686 789,690 789,695 Z" fill="url(#ao1)"/>
<path d="M790,703 C803,709 816,709 828.7,703 L828.7,708 C816,714 803,714 790,708 Z" fill="#d29c60" opacity="0.7"/>
<!-- link2 (with bulb) -->
<path d="M800.8,553.9 C797,558 795,563 793,568 C791.5,572 791.5,575 791.5,580 L791.5,612 C791,620 789,630 786,640 C783,648 782,653 782,658 C782,670 792,681 803,681 C810,681 816,678 822,676 C832,672 841,660 841.1,646.8 C841,632 832,624 822,625 L826,612 L826.2,581.6 L827.3,549.2 Z" fill="url(#tan)"/>
<path d="M800.8,553.9 C797,558 795,563 793,568 C791.5,572 791.5,575 791.5,590 L826.2,590 L827.3,549.2 Z" fill="url(#ao2)"/>
<path d="M814.4,626.5 C826,622 838,630 841.1,646.8 C842,660 834,671 824.6,674.8 C818,676 816,672 815.7,669.7 C819,660 820,645 814.4,635.4 Z" fill="url(#cap)"/>
<path d="M814.4,626 C818,640 820,655 815.7,670" stroke="#8c6a48" stroke-width="1" fill="none" opacity="0.6"/>
<!-- link3 (with bulb) -->
<path d="M792.7,459.2 C793,455 797,449 801.9,447.7 C806,444 810,438 813,434 L816,405 L834,405 C831,415 829,422 828,428 C826.5,434 825,438 823.9,443 L822.7,461.5 L822.7,496.2 C822,501 820.5,504 819.2,506.5 C825,506 833,510 835.4,514.6 C838,519 838.9,522 838.9,526.2 C838.9,532 837.5,537 835.4,540 C832,545 828,548 823.9,548.1 C821,549.5 819,549.5 816.9,549.2 C812,551 808,553.4 803.1,553.4 C797,553 793,550 790.4,546.9 C787,543 785.1,538 785.1,533.1 C785.1,528 786,524 788.1,521.5 C790,516 792.7,512 792.7,507.7 Z" fill="url(#tan)"/>
<path d="M819.2,507 C825,506 833,510 835.4,514.6 C838,519 838.9,522 838.9,526.2 C838.9,532 837.5,537 835.4,540 C832,545 828,548 823.9,548.1 C821,549 819.5,548.5 819.2,547 C821,540 820.5,530 816.9,523.9 C816,518 815.8,514 815.8,512.3 Z" fill="url(#cap)"/>
<path d="M815.8,512.3 C817,522 821,535 819.2,547" stroke="#8c6a48" stroke-width="1" fill="none" opacity="0.6"/>
<path d="M794,463 C803,466 814,466 822.5,463" stroke="#6a4a2a" stroke-width="0.8" fill="none" stroke-dasharray="1.2 2.2" opacity="0.6"/>
<path d="M794,468 C803,471 814,471 822.5,468" stroke="#6a4a2a" stroke-width="0.7" fill="none" stroke-dasharray="1.2 3" opacity="0.45"/>
<path d="M792,588 C803,592 815,592 826,588" stroke="#6a4a2a" stroke-width="0.8" fill="none" stroke-dasharray="1.2 2.2" opacity="0.6"/>
<path d="M792,593 C803,597 815,597 826,593" stroke="#6a4a2a" stroke-width="0.7" fill="none" stroke-dasharray="1.2 3" opacity="0.45"/>
<!-- purple -->
<path d="M802.3,441.7 L818,438 L807.9,450 Z" fill="#a596c8"/>
<path d="M800,442 L818,437" stroke="#3030a0" stroke-width="1.5"/>
<!-- marker rings -->
<g opacity="0.88">
<ellipse cx="805" cy="348" rx="39" ry="65.5" transform="rotate(7 805 348)" fill="none" stroke="#c81e1e" stroke-width="12"/>
<path d="M837.8,352.0 L837.2,356.0 L836.5,360.0 L835.6,363.8 L835.7,394.7 L837.9,390.9 L839.9,387.0 L841.8,382.9Z M830.6,379.0 L829.1,382.3 L827.5,385.5 L825.7,388.5 L816.6,414.3 L819.5,412.4 L822.4,410.2 L825.2,407.7Z M817.6,398.9 L815.5,400.8 L813.3,402.5 L811.1,403.9 L794.8,418.7 L797.8,419.1 L800.9,419.2 L803.9,418.9Z M801.7,407.1 L799.5,407.2 L797.3,407.0 L795.1,406.5 L775.3,407.0 L777.7,409.5 L780.3,411.8 L782.9,413.8Z M786.6,401.8 L784.8,400.0 L783.0,398.0 L781.3,395.7 L762.7,381.7 L763.9,385.9 L765.4,389.8 L767.0,393.6Z M775.7,384.2 L774.6,380.9 L773.7,377.5 L773.0,374.0 L759.7,348.7 L759.5,353.5 L759.5,358.3 L759.7,363.0Z M771.5,358.2 L771.5,354.3 L771.7,350.3 L772.0,346.3 L767.2,315.5 L765.5,319.9 L764.1,324.4 L762.8,329.0Z M774.9,330.0 L776.0,326.2 L777.2,322.5 L778.6,319.0 L783.2,289.8 L780.6,292.7 L778.1,295.9 L775.6,299.3Z M785.3,305.8 L787.2,303.1 L789.1,300.6 L791.2,298.3 L804.3,277.4 L801.2,278.2 L798.2,279.3 L795.2,280.7Z M800.2,291.4 L802.4,290.3 L804.7,289.6 L807.0,289.1 L825.5,281.2 L822.7,279.7 L819.9,278.5 L816.9,277.6Z M816.1,289.9 L818.3,290.7 L820.3,291.9 L822.3,293.3 L842.1,300.3 L840.2,296.8 L838.2,293.6 L836.0,290.6Z M829.6,301.7 L831.1,304.3 L832.4,307.1 L833.7,310.1 L850.1,330.3 L849.6,325.7 L848.8,321.1 L847.9,316.7Z M837.4,324.1 L837.9,327.8 L838.3,331.6 L838.5,335.5 L847.8,364.4 L848.7,359.6 L849.5,354.9 L850.0,350.0Z" fill="#7a1414" opacity="1.0"/>
</g>
<g opacity="0.85">
<ellipse cx="810.5" cy="341" rx="61" ry="72.7" transform="rotate(-3 810.5 341)" fill="none" stroke="#36b836" stroke-width="16"/>
<path d="M863.4,338.2 L863.5,341.1 L863.5,344.0 L863.4,346.9 L876.5,365.9 L877.3,362.5 L878.0,359.0 L878.6,355.4Z M862.1,357.4 L861.5,360.2 L860.8,362.9 L859.9,365.6 L867.6,387.4 L869.3,384.4 L870.8,381.3 L872.3,378.2Z M856.1,375.1 L854.9,377.5 L853.5,379.9 L852.1,382.2 L853.6,404.8 L856.0,402.5 L858.3,400.1 L860.5,397.6Z M846.1,389.8 L844.3,391.6 L842.5,393.4 L840.6,395.0 L835.8,416.5 L838.7,415.2 L841.5,413.7 L844.2,412.0Z M833.0,400.1 L830.8,401.2 L828.6,402.2 L826.3,403.1 L815.8,421.5 L818.8,421.2 L821.9,420.8 L824.9,420.2Z M817.8,405.2 L815.5,405.5 L813.1,405.6 L810.7,405.7 L795.2,419.4 L798.3,420.1 L801.3,420.8 L804.4,421.2Z M802.0,404.6 L799.7,404.0 L797.4,403.3 L795.1,402.5 L776.1,410.2 L778.8,412.0 L781.6,413.7 L784.4,415.2Z M787.0,398.3 L784.9,396.9 L782.8,395.4 L780.8,393.8 L760.0,395.0 L762.1,397.6 L764.4,400.1 L766.7,402.5Z M774.0,387.0 L772.3,384.9 L770.7,382.7 L769.2,380.5 L748.3,374.9 L749.8,378.2 L751.3,381.3 L752.9,384.4Z M764.3,371.5 L763.2,368.9 L762.1,366.3 L761.2,363.6 L742.3,351.8 L742.8,355.4 L743.5,358.9 L744.3,362.5Z M758.7,353.4 L758.2,350.5 L757.9,347.6 L757.6,344.7 L742.2,327.8 L741.8,331.4 L741.6,335.0 L741.5,338.6Z M757.7,334.1 L757.9,331.2 L758.3,328.4 L758.7,325.5 L748.3,304.9 L747.0,308.2 L745.8,311.5 L744.8,314.9Z M761.3,315.5 L762.3,312.8 L763.3,310.2 L764.5,307.7 L759.8,285.2 L757.8,287.9 L755.8,290.7 L754.0,293.6Z M769.4,299.1 L770.9,296.9 L772.6,294.8 L774.3,292.9 L775.9,270.5 L773.3,272.4 L770.7,274.3 L768.2,276.4Z M781.1,286.4 L783.1,284.9 L785.2,283.5 L787.3,282.3 L795.0,262.1 L792.0,262.9 L789.1,263.9 L786.2,265.1Z M795.4,278.6 L797.7,277.9 L800.0,277.3 L802.4,276.9 L815.6,260.7 L812.5,260.4 L809.4,260.3 L806.3,260.4Z M811.1,276.4 L813.5,276.5 L815.8,276.8 L818.2,277.2 L835.6,266.4 L832.7,265.1 L829.8,263.9 L826.8,262.9Z M826.7,279.8 L828.9,280.8 L831.1,282.0 L833.3,283.2 L853.5,278.7 L851.0,276.5 L848.5,274.4 L845.8,272.4Z M840.9,288.8 L842.8,290.5 L844.6,292.4 L846.4,294.3 L867.5,296.6 L865.7,293.6 L863.8,290.7 L861.7,287.9Z M852.3,302.3 L853.7,304.7 L855.1,307.1 L856.3,309.6 L876.4,318.4 L875.5,314.9 L874.3,311.5 L873.1,308.2Z M860.1,319.3 L860.9,322.1 L861.6,324.9 L862.2,327.7 L879.5,342.2 L879.5,338.6 L879.2,335.0 L878.9,331.4Z" fill="#1b6a1b" opacity="1.0"/>
</g>
<path d="M786.6,419.6 L792.2,403 L798.6,405.7 L795.9,423.3 Z" fill="#f04a30"/>
<!-- link5 -->
<path d="M792.4,368 L823,368 L819.9,390 C818,398 815,403 812.5,405.7 C816,410 821,416 821.7,425 C821,431 818,435 813.4,434.3 C810,438 805,440 800.5,439.9 C792,439 787,432 787.1,425.1 C787,416 793.1,410 793.1,402 Z" fill="url(#tan)"/>
<path d="M811.6,410 C818,410 821.7,418 821.7,424 C821.7,430 818,433.4 813.4,434.3 C815,428 815,416 811.6,410 Z" fill="url(#cap)"/>
<!-- blue arrow -->
<path d="M807.7,226.4 L823,252.5 L792,252.5 Z" fill="#1e20a0"/>
<rect x="798.8" y="252" width="17.8" height="28" fill="#2a3aa8" opacity="0.85"/>
<!-- red arrows -->
<path d="M717.7,335.8 L736,322.2 L736,352.2 Z" fill="#9a1818"/>
<rect x="736" y="331" width="24" height="18" fill="#a82020" opacity="0.8"/>
<path d="M910,351.3 L880,333.8 L880,364.8 Z" fill="#d41c1c"/>
<rect x="858" y="339" width="23" height="18" fill="#b84a22" opacity="0.85"/>
<!-- sphere -->
<circle cx="807" cy="341.5" r="30" fill="url(#sph)" opacity="0.85"/>
<path d="M789,348 C790,342 824,341 823,347 L822,362 C818,370 812,372 806,372 C800,372 794,370 790,366 Z" fill="#7cd0c0" opacity="0.6"/><path d="M789,348 C792,343 822,343 823,347" fill="none" stroke="#9ee0d0" stroke-width="1.2" opacity="0.7"/>
<!-- blue ring -->
<ellipse cx="805" cy="344" rx="78" ry="9" fill="none" stroke="#2038c0" stroke-width="2.2"/><path d="M760,335.5 C780,333.5 830,333.5 850,335.5" fill="none" stroke="#2a80e0" stroke-width="1.2" opacity="0.8"/>
<path d="M725,343 C735,337 750,336 760,338 L760,350 C748,350 735,349 725,343Z" fill="#4a1aa8" opacity="0.8"/>
<!-- green discs -->
<circle cx="757" cy="353" r="13.5" fill="#1aa81a" opacity="0.9"/><circle cx="756" cy="352" r="8.5" fill="#22c822" opacity="0.7"/>
<circle cx="775.7" cy="351.8" r="8" fill="#1a9a1a" opacity="0.6"/>
<circle cx="847" cy="336" r="14.5" fill="#22a022" opacity="0.55"/>
</svg>
</body></html>
